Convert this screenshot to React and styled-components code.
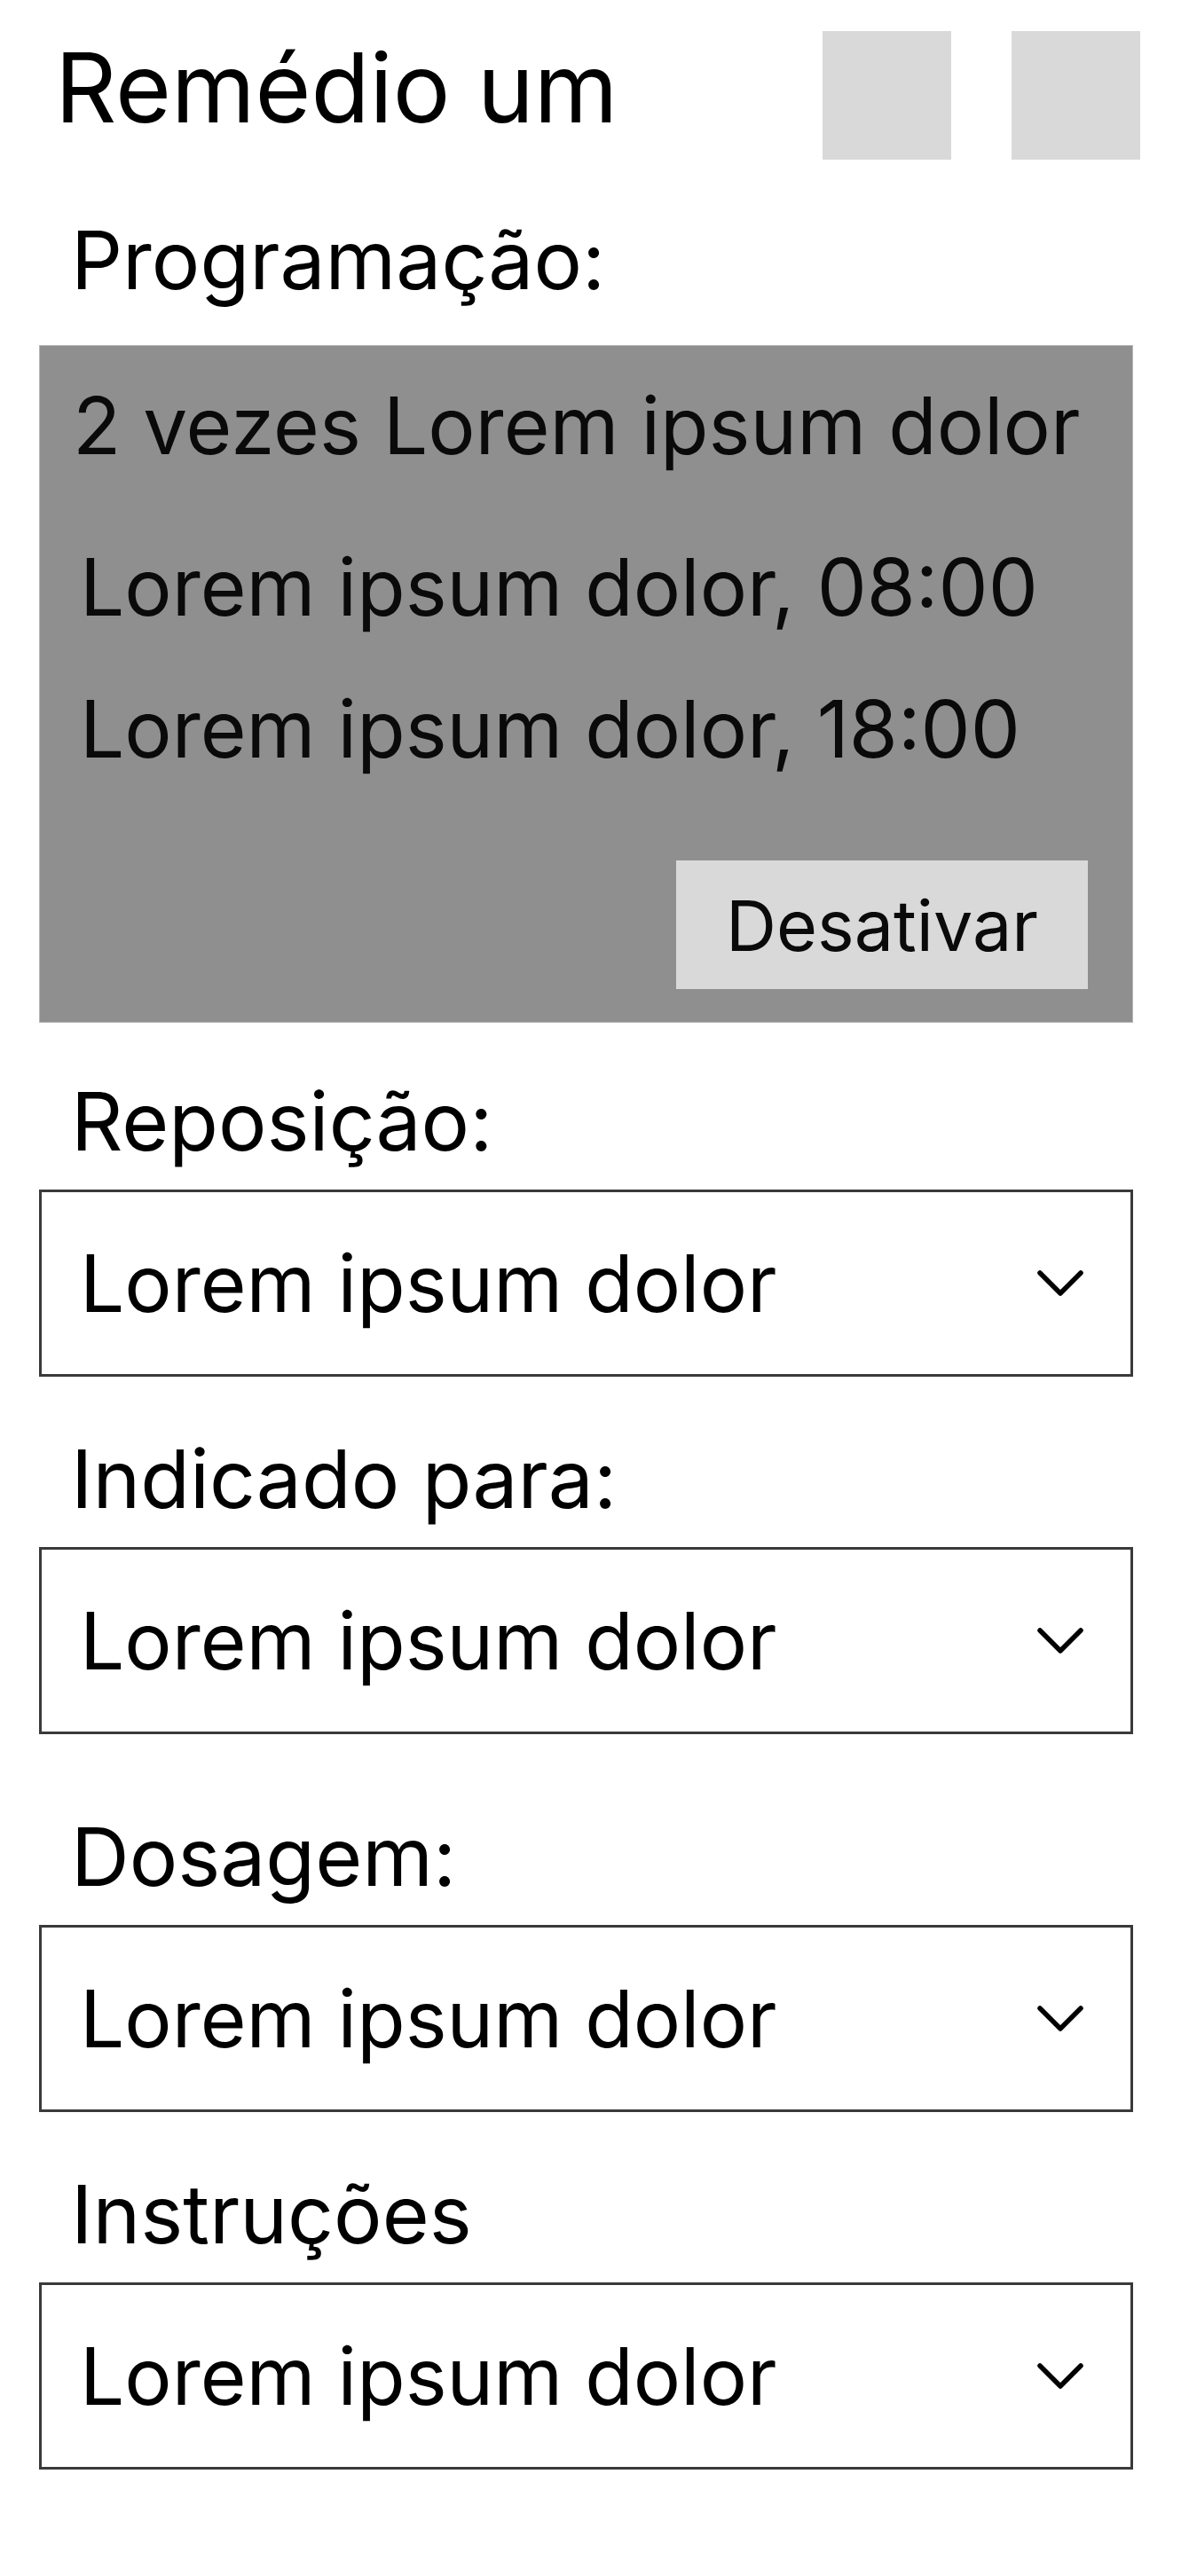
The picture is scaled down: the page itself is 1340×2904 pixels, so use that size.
import styled, { createGlobalStyle } from 'styled-components';

const GlobalStyle = createGlobalStyle`
  body {
    margin: 0;
    background: #ffffff;
    font-family: Inter, "Noto Sans", sans-serif;
    color: #000000;
  }
`;

const Page = styled.div`
  display: flex;
  flex-direction: column;
  padding: 35px 0 120px 44px;
  width: 1233px;
`;

const Header = styled.div`
  display: flex;
  justify-content: space-between;
  align-items: flex-start;
  width: 1241px;
`;

const Title = styled.h1`
  margin: 10px 0 0;
  padding-left: 18px;
  font-size: 108px;
  font-weight: 400;
  line-height: 1;
`;

const IconGroup = styled.div`
  display: flex;
  gap: 68px;
`;

const IconBox = styled.div`
  width: 145px;
  height: 145px;
  background: #d9d9d9;
`;

const Label = styled.div`
  margin-top: ${p => p.$gap}px;
  padding-left: 36px;
  font-size: 91px;
  line-height: 1;
`;

const SchedulePanel = styled.section`
  display: flex;
  flex-direction: column;
  margin-top: 50px;
  padding: 46px 51px 38px 38px;
  background: #8f8f8f;
  box-shadow: inset 0 0 0 1px #b5b5b5;
`;

const PanelLine = styled.div`
  margin-top: ${p => p.$gap || 0}px;
  padding-left: ${p => p.$indent || 0}px;
  font-size: 89px;
  line-height: 1;
  color: #0a0a0a;
`;

const DisableButton = styled.button`
  align-self: flex-end;
  width: 464px;
  height: 145px;
  margin-top: 104px;
  border: none;
  background: #d9d9d9;
  font-family: Inter, "Noto Sans", sans-serif;
  font-size: 79px;
  color: #0a0a0a;
  cursor: pointer;
`;

const Select = styled.div`
  display: flex;
  align-items: center;
  justify-content: space-between;
  box-sizing: border-box;
  height: 211px;
  margin-top: 31px;
  padding: 0 52px 0 43px;
  border: 3px solid #3a3a3a;
  font-size: 89px;
  line-height: 1;
`;

const Chevron = () => (
  <svg width="54" height="32" viewBox="0 0 54 32" fill="none">
    <polyline points="4,4 27,27 50,4" stroke="#000" strokeWidth="5.5" strokeLinecap="round" strokeLinejoin="round" />
  </svg>
);

const fields = [
  { label: 'Reposição:', gap: 66 },
  { label: 'Indicado para:', gap: 70 },
  { label: 'Dosagem:', gap: 93 },
  { label: 'Instruções', gap: 70 },
];

export default function App() {
  return (
    <>
      <GlobalStyle />
      <Page>
        <Header>
          <Title>Remédio um</Title>
          <IconGroup>
            <IconBox />
            <IconBox />
          </IconGroup>
        </Header>

        <Label $gap={68}>Programação:</Label>
        <SchedulePanel>
          <PanelLine>2 vezes Lorem ipsum dolor</PanelLine>
          <PanelLine $gap={93} $indent={8}>Lorem ipsum dolor, 08:00</PanelLine>
          <PanelLine $gap={71} $indent={8}>Lorem ipsum dolor, 18:00</PanelLine>
          <DisableButton>Desativar</DisableButton>
        </SchedulePanel>

        {fields.map(f => (
          <div key={f.label}>
            <Label $gap={f.gap}>{f.label}</Label>
            <Select>
              <span>Lorem ipsum dolor</span>
              <Chevron />
            </Select>
          </div>
        ))}
      </Page>
    </>
  );
}
